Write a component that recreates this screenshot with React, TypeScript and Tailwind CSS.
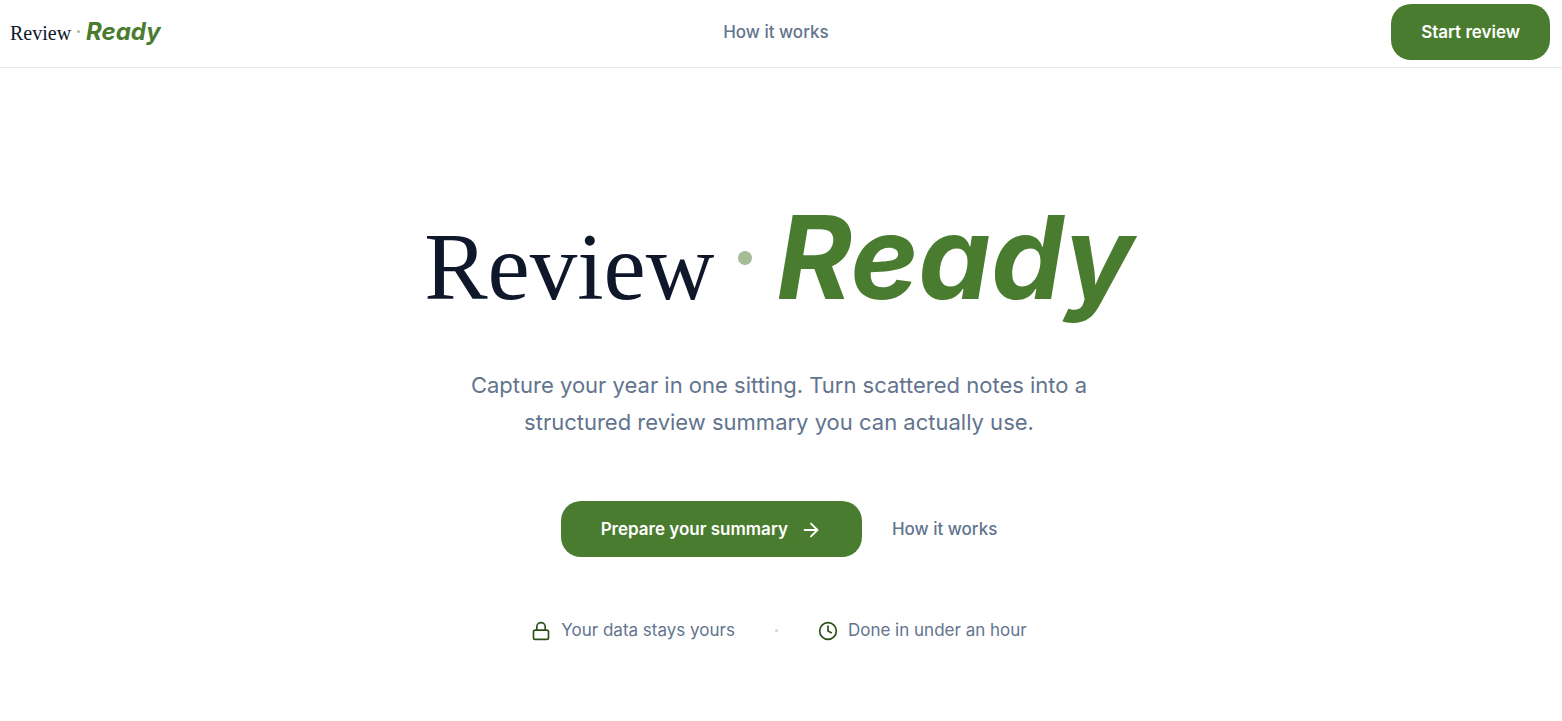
import React from "react"
import { ArrowRight, Clock, Lock } from "lucide-react"

interface WordmarkProps {
  size: "small" | "large"
}

const Wordmark = (props: WordmarkProps) => {
  const isLarge = props.size === "large"

  return (
    <span className={`inline-flex items-baseline whitespace-nowrap leading-none ${isLarge ? "gap-6" : "gap-1.5"}`}>
      <span className={`font-['Liberation_Serif',serif] text-[#0f172a] ${isLarge ? "text-[95px]" : "text-[20px]"}`}>Review</span>
      <span className={`self-center rounded-full bg-[#a5bd96] ${isLarge ? "size-3.5" : "size-[3px]"}`} />
      <span className={`font-bold italic text-[#4a7c2f] ${isLarge ? "text-[115px]" : "text-[24px]"}`}>Ready</span>
    </span>
  )
}

const Header = () => {
  return (
    <header className="flex h-[68px] items-center justify-between border-b border-slate-200 pr-3 pb-1 pl-2.5">
      <a href="#top" className="pt-0.5">
        <Wordmark size="small" />
      </a>
      <nav className="pt-0.5">
        <a href="#how-it-works" className="text-[17px] font-medium text-slate-500">
          How it works
        </a>
      </nav>
      <button type="button" className="h-14 rounded-[20px] bg-[#4a7c2f] px-[30px] pt-0.5 text-[17px] font-semibold text-white">
        Start review
      </button>
    </header>
  )
}

const Hero = () => {
  return (
    <main id="top" className="flex flex-col items-center pt-[132px] pr-7 pb-16 pl-6 text-center">
      <h1>
        <Wordmark size="large" />
      </h1>

      <p className="mt-[52px] max-w-[660px] text-[22px] leading-[37px] text-slate-500">
        Capture your year in one sitting. Turn scattered notes into a structured review summary you can actually use.
      </p>

      <div className="mt-[60px] flex items-center gap-[30px]">
        <button type="button" className="flex h-14 items-center gap-3 rounded-[20px] bg-[#4a7c2f] px-10 pt-0.5 text-[17px] font-semibold text-white">
          Prepare your summary
          <ArrowRight size={22} />
        </button>
        <a href="#how-it-works" className="pt-0.5 text-[17px] font-medium text-slate-500">
          How it works
        </a>
      </div>

      <ul className="mt-[61px] flex items-center gap-10 text-[17px] text-slate-500">
        <li className="flex items-center gap-2.5">
          <Lock size={20} className="text-[#2d5016]" />
          Your data stays yours
        </li>
        <li aria-hidden="true" className="size-[3px] rounded-full bg-slate-300" />
        <li className="flex items-center gap-2.5">
          <Clock size={20} className="text-[#2d5016]" />
          Done in under an hour
        </li>
      </ul>
    </main>
  )
}

const App = () => {
  return (
    <div className="min-h-screen bg-white font-['Inter',sans-serif]">
      <Header />
      <Hero />
    </div>
  )
}

export default App
